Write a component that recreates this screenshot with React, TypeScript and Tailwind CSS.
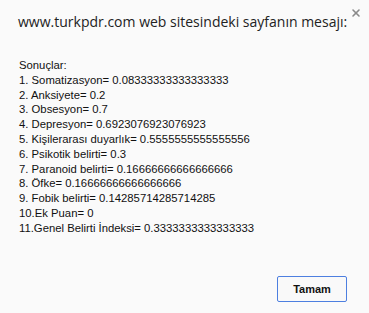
import React from "react";
import { X } from "lucide-react";

const lines = [
  "Sonuçlar:",
  "1. Somatizasyon= 0.08333333333333333",
  "2. Anksiyete= 0.2",
  "3. Obsesyon= 0.7",
  "4. Depresyon= 0.6923076923076923",
  "5. Kişilerarası duyarlık= 0.5555555555555556",
  "6. Psikotik belirti= 0.3",
  "7. Paranoid belirti= 0.16666666666666666",
  "8. Öfke= 0.16666666666666666",
  "9. Fobik belirti= 0.14285714285714285",
  "10.Ek Puan= 0",
  "11.Genel Belirti İndeksi= 0.3333333333333333",
];

export default function App() {
  return (
    <div className="w-[369px] h-[313px] bg-[#fafafa] relative overflow-hidden">
      <button className="absolute top-[7px] right-[7px] text-[#8a8a8a]">
        <X className="w-[12px] h-[12px]" strokeWidth={3.2} />
      </button>
      <div className="pt-[12px] pl-[18px] pr-[20px] font-['Open_Sans',sans-serif] text-[14px] text-[#222] leading-[20px] whitespace-nowrap">
        www.turkpdr.com web sitesindeki sayfanın mesajı:
      </div>
      <div className="mt-[26px] pl-[19px] font-['Liberation_Sans',Arial,sans-serif] text-[11.3px] leading-[14.8px] text-[#111] whitespace-nowrap">
        {lines.map((l) => (
          <div key={l}>{l}</div>
        ))}
      </div>
      <div className="absolute left-[277px] top-[275px]">
        <button className="w-[70px] h-[26px] border border-[#4d7fe0] rounded-[2px] bg-[#f9f9f9] font-['Liberation_Sans',Arial,sans-serif] font-bold text-[11px] text-[#111]">
          Tamam
        </button>
      </div>
    </div>
  );
}
